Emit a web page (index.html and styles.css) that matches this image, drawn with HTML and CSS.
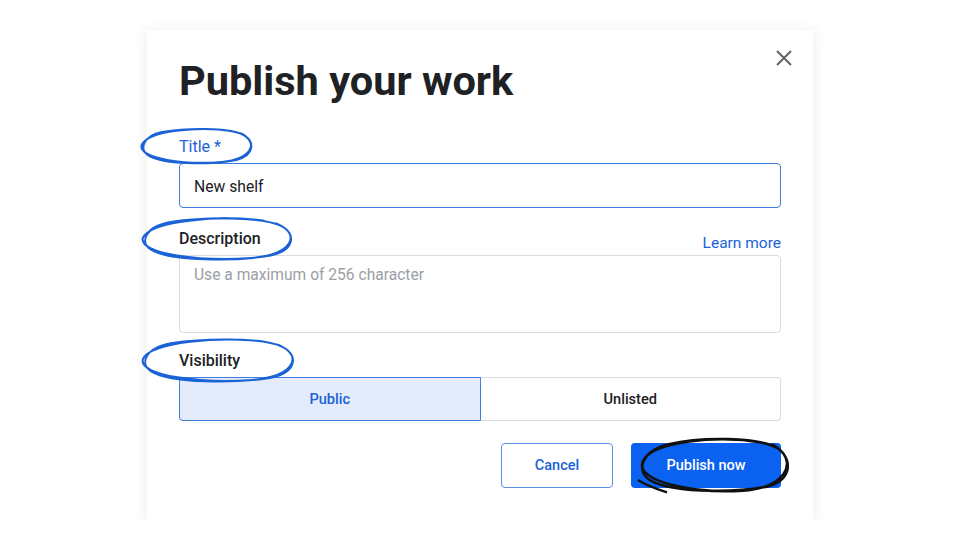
FILE: index.html
```html
<!DOCTYPE html>
<html lang="en">
<head>
    <meta charset="UTF-8">
    <meta name="viewport" content="width=device-width, initial-scale=1.0">
    <title>Publish your work</title>
    <link rel="stylesheet" href="styles.css">
</head>
<body>
    <div class="dialog">
        <button class="close" aria-label="Close">
            <svg width="18" height="18" viewBox="0 0 18 18"><path d="M2 2L16 16M16 2L2 16" stroke="#5f6368" stroke-width="2" fill="none"/></svg>
        </button>
        <h1>Publish your work</h1>

        <div class="field-head">
            <label class="label label-title">Title *
                <svg class="scribble scribble-title" viewBox="0 0 100 40" preserveAspectRatio="none"><path d="M78 4C50 -1 8 4 3 18C0 32 40 38 70 35C95 32 100 16 88 8C75 0 40 1 20 5C4 9 1 22 8 28C20 38 60 38 82 33C97 28 99 14 85 6"/></svg>
            </label>
        </div>
        <div class="input">New shelf</div>

        <div class="field-head field-desc">
            <label class="label">Description
                <svg class="scribble scribble-desc" viewBox="0 0 100 40" preserveAspectRatio="none"><path d="M78 4C50 -1 8 4 3 18C0 32 40 38 70 35C95 32 100 16 88 8C75 0 40 1 20 5C4 9 1 22 8 28C20 38 60 38 82 33C97 28 99 14 85 6"/></svg>
            </label>
            <a class="learn" href="#">Learn more</a>
        </div>
        <div class="textarea">Use a maximum of 256 character</div>

        <div class="field-head field-vis">
            <label class="label">Visibility
                <svg class="scribble scribble-vis" viewBox="0 0 100 40" preserveAspectRatio="none"><path d="M78 4C50 -1 8 4 3 18C0 32 40 38 70 35C95 32 100 16 88 8C75 0 40 1 20 5C4 9 1 22 8 28C20 38 60 38 82 33C97 28 99 14 85 6"/></svg>
            </label>
        </div>
        <div class="segmented">
            <div class="seg seg-on">Public</div>
            <div class="seg">Unlisted</div>
        </div>

        <div class="actions">
            <button class="btn btn-cancel">Cancel</button>
            <button class="btn btn-publish">Publish now
                <svg class="scribble scribble-pub" viewBox="0 0 100 40" preserveAspectRatio="none"><path d="M80 5C52 0 12 4 6 17C1 30 38 38 68 36C94 34 101 18 90 9C78 1 42 1 22 6C6 10 2 22 9 28C20 37 60 38 84 33C98 29 100 15 86 6M3 29C9 33 15 35 21 37"/></svg>
            </button>
        </div>
    </div>
</body>
</html>
```

FILE: styles.css
```css
body {
    margin: 0;
    background: #fff;
    font-family: Roboto, "Liberation Sans", sans-serif;
    color: #202124;
}

.dialog {
    position: relative;
    width: 666px;
    box-sizing: border-box;
    margin: 30px 0 0 147px;
    padding: 26px 32px 32px;
    background: #fff;
    box-shadow: 0 2px 14px rgba(0, 0, 0, 0.09);
}

.close {
    position: absolute;
    top: 19px;
    right: 20px;
    width: 18px;
    height: 18px;
    padding: 0;
    border: none;
    background: none;
}

.close svg {
    display: block;
}

h1 {
    margin: 0;
    font-size: 41.5px;
    line-height: 49px;
    font-weight: 700;
    color: #202124;
}

.field-head {
    display: flex;
    justify-content: space-between;
    align-items: flex-end;
    margin-top: 32px;
    margin-bottom: 6px;
}

.field-desc {
    margin-top: 21px;
    margin-bottom: 2px;
}

.field-desc .label {
    padding-bottom: 4px;
}

.field-vis {
    margin-top: 18px;
}

.label {
    position: relative;
    font-size: 16px;
    line-height: 20px;
    font-weight: 500;
    color: #202124;
}

.label-title {
    font-weight: 400;
    color: #1a62d6;
}

.scribble {
    position: absolute;
    fill: none;
    stroke: #1a62d6;
    stroke-width: 2;
    overflow: visible;
    pointer-events: none;
}

.scribble path {
    vector-effect: non-scaling-stroke;
}

.scribble-title {
    left: -41px;
    top: -10px;
    width: 120px;
    height: 40px;
}

.scribble-desc {
    left: -41px;
    top: -13px;
    width: 162px;
    height: 48px;
}

.scribble-vis {
    left: -41px;
    top: -14px;
    width: 164px;
    height: 49px;
}

.learn {
    font-size: 15.5px;
    line-height: 20px;
    color: #1a62d6;
    text-decoration: none;
}

.input {
    height: 45px;
    box-sizing: border-box;
    padding: 1px 14px 0;
    border: 1px solid #3f7fe3;
    border-radius: 4px;
    font-size: 15.7px;
    line-height: 43px;
    color: #202124;
}

.textarea {
    height: 78px;
    box-sizing: border-box;
    padding: 9px 14px;
    border: 1px solid #dadce0;
    border-radius: 4px;
    font-size: 15.6px;
    line-height: 20px;
    color: #9aa0a6;
}

.segmented {
    display: flex;
    height: 44px;
}

.seg {
    flex: 1;
    display: flex;
    align-items: center;
    justify-content: center;
    border: 1px solid #dadce0;
    border-left: none;
    border-radius: 0 4px 4px 0;
    font-size: 14.6px;
    font-weight: 500;
    color: #202124;
}

.seg-on {
    border: 1px solid #3f7fe3;
    border-radius: 4px 0 0 4px;
    background: #e4ecfc;
    color: #1a62d6;
}

.actions {
    display: flex;
    justify-content: flex-end;
    gap: 18px;
    margin-top: 22px;
}

.btn {
    position: relative;
    height: 45px;
    border-radius: 4px;
    font-family: inherit;
    font-size: 14.5px;
    font-weight: 500;
}

.btn-cancel {
    width: 112px;
    border: 1px solid #5b8ee6;
    background: #fff;
    color: #1a62d6;
}

.btn-publish {
    width: 150px;
    border: none;
    background: #0b62f0;
    color: #fff;
}

.scribble-pub {
    left: 2px;
    top: -8px;
    width: 162px;
    height: 62px;
    stroke: #111;
    stroke-width: 2.5;
}
```
